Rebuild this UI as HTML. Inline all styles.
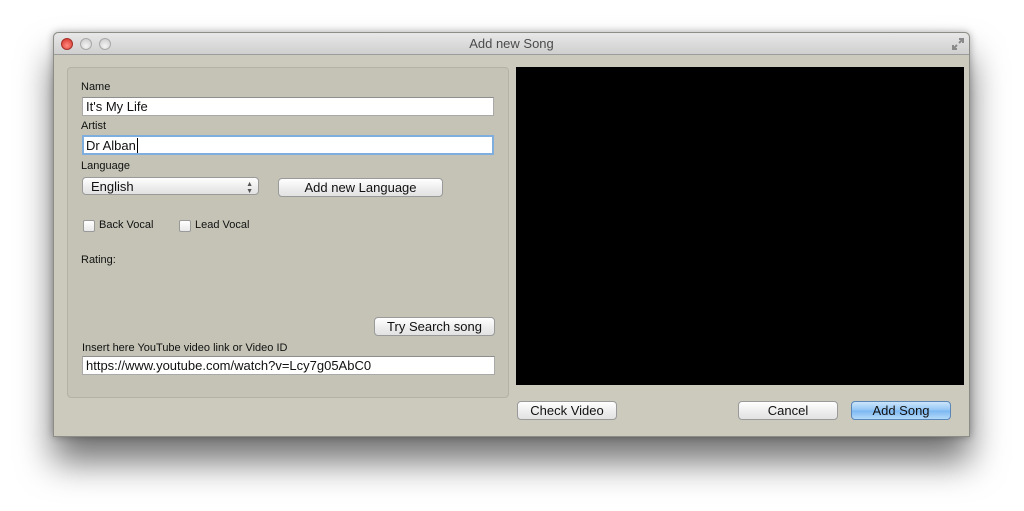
<!DOCTYPE html>
<html><head><meta charset="utf-8"><style>
*{box-sizing:border-box;margin:0;padding:0}
body{width:1024px;height:511px;background:#fff;position:relative;overflow:hidden;font-family:"Liberation Sans",sans-serif;font-size:11px;color:#111}
.win{position:absolute;left:53px;top:32px;width:917px;height:405px;background:#cbcabd;border:1px solid #8d8d88;border-radius:5px 5px 0 0;box-shadow:0 25px 35px rgba(0,0,0,0.55),0 0 8px rgba(0,0,0,0.3)}
.tb{position:absolute;left:0;top:0;width:100%;height:22px;background:linear-gradient(#e8e8e8,#cfcfcf);border-bottom:1px solid #9c9c9c;border-radius:5px 5px 0 0;text-align:center;font-size:13px;line-height:22px;color:#4b4b4b}
.dot{position:absolute;top:5px;width:12px;height:12px;border-radius:50%;border:1px solid #a8a8a8;background:radial-gradient(circle at 50% 70%,#f4f4f4,#c8c8c8)}
.red{background:radial-gradient(circle at 50% 65%,#ff8a80,#d32b21);border-color:#a3322a}
.group{position:absolute;left:13px;top:34px;width:442px;height:331px;border:1px solid #b3b2a6;border-radius:4px;background:#c4c3b6}
.lbl{position:absolute;font-size:11px;color:#111}
.inp{position:absolute;background:#fff;border:1px solid #a9a9a9;border-top-color:#8e8e8e;font-size:13px;padding-left:3px;line-height:17px}
.btn{position:absolute;background:linear-gradient(#fff,#ececec 60%,#e2e2e2);border:1px solid #9a9a9a;border-radius:4px;font-size:13px;text-align:center;line-height:17px;color:#111}
.blue{background:linear-gradient(#cbe4fb,#91c5f5 50%,#7ab7f2 51%,#b4daf8);border-color:#5b87b8}
.cb{position:absolute;width:12px;height:12px;background:linear-gradient(#fff,#e8e8e8);border:1px solid #9a9a9a;border-radius:2px}
</style></head><body>
<div class="win">
 <div class="tb">Add new Song
  <div class="dot red" style="left:7px"></div>
  <div class="dot" style="left:26px"></div>
  <div class="dot" style="left:45px"></div>
  <svg style="position:absolute;right:4px;top:4px" width="14" height="14" viewBox="0 0 14 14"><path d="M8 2h4v4M12 2L8 6M6 12H2V8M2 12l4-4" stroke="#8a8a8a" stroke-width="2" fill="none"/></svg>
 </div>
 <div class="group"></div>
 <div class="lbl" style="left:27px;top:48px">Name</div>
 <div class="inp" style="left:28px;top:64px;width:412px;height:19px">It's My Life</div>
 <div class="lbl" style="left:27px;top:87px">Artist</div>
 <div class="inp" style="left:28px;top:102px;width:412px;height:20px;border:2px solid #7fadde;padding-left:2px">Dr Alban<span style="border-left:1px solid #000;margin-left:1px"></span></div>
 <div class="lbl" style="left:27px;top:127px">Language</div>
 <div class="btn" style="left:28px;top:144px;width:177px;height:18px;text-align:left;padding-left:8px">English<span style="position:absolute;right:5px;font-size:7px;line-height:7px;color:#555;top:3px">▲<br>▼</span></div>
 <div class="btn" style="left:224px;top:145px;width:165px;height:19px">Add new Language</div>
 <div class="cb" style="left:29px;top:187px"></div><div class="lbl" style="left:45px;top:186px">Back Vocal</div>
 <div class="cb" style="left:125px;top:187px"></div><div class="lbl" style="left:141px;top:186px">Lead Vocal</div>
 <div class="lbl" style="left:27px;top:221px">Rating:</div>
 <div class="btn" style="left:320px;top:284px;width:121px;height:19px">Try Search song</div>
 <div class="lbl" style="left:28px;top:309px">Insert here YouTube video link or Video ID</div>
 <div class="inp" style="left:28px;top:323px;width:413px;height:19px">https://www.youtube.com/watch?v=Lcy7g05AbC0</div>
 <div style="position:absolute;left:462px;top:34px;width:448px;height:318px;background:#000"></div>
 <div class="btn" style="left:463px;top:368px;width:100px;height:19px">Check Video</div>
 <div class="btn" style="left:684px;top:368px;width:100px;height:19px">Cancel</div>
 <div class="btn blue" style="left:797px;top:368px;width:100px;height:19px">Add Song</div>
</div>
</body></html>
